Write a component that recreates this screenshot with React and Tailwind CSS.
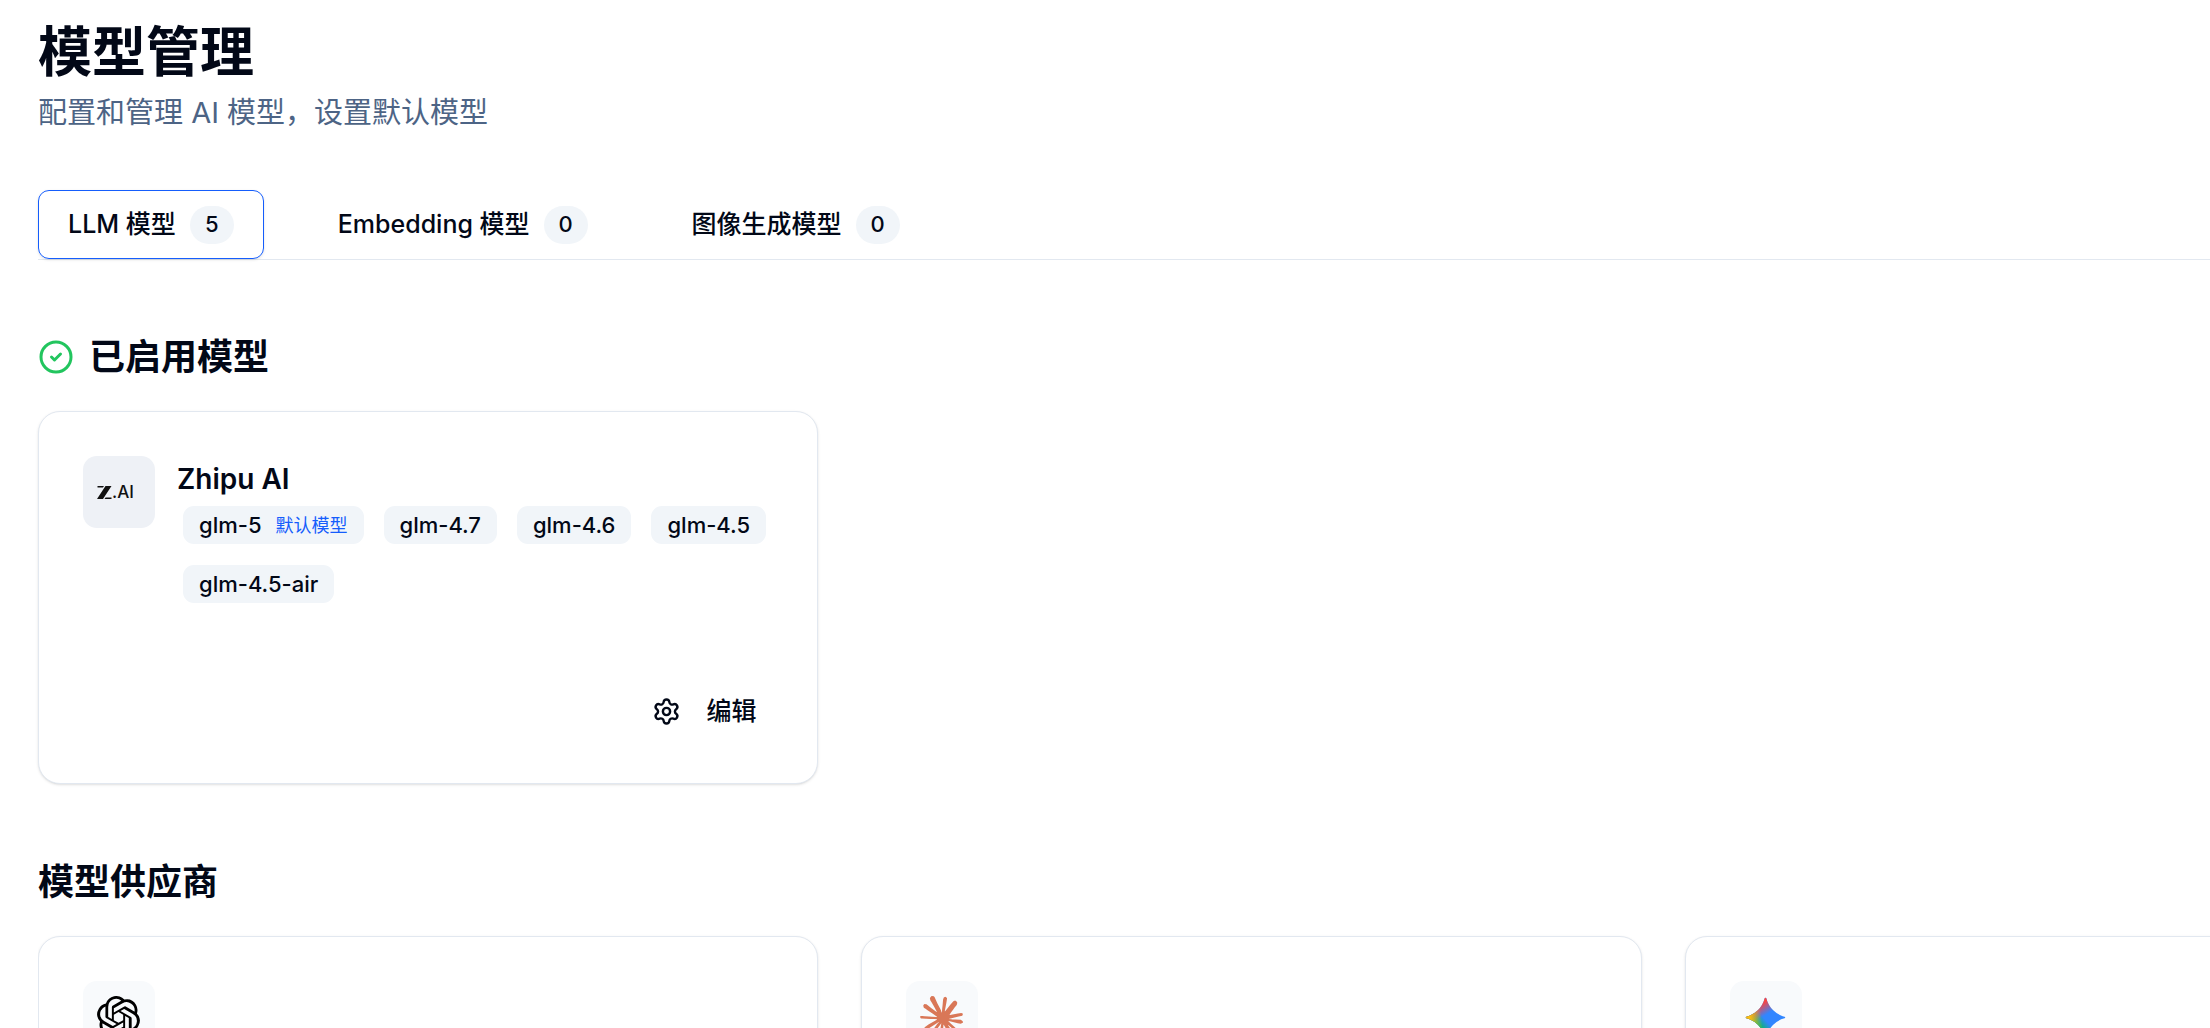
import { CircleCheck, Settings } from "lucide-react";

const FONT = 'font-[Inter,"Noto_Sans_CJK_SC",sans-serif]';

const TABS = [
  { label: "LLM 模型", count: 5 },
  { label: "Embedding 模型", count: 0 },
  { label: "图像生成模型", count: 0 },
];

const MODELS = ["glm-5", "glm-4.7", "glm-4.6", "glm-4.5", "glm-4.5-air"];

function ZaiLogo() {
  return (
    <span className="flex items-center text-[#111]">
      <svg viewBox="0 0 30 26" className="h-[13px] w-[15px]" fill="currentColor" aria-hidden="true">
        <path d="M1 0h13l-2.2 3H1zM29 0 12 26H0L17 0zM29 23v3H15l2.2-3z" />
      </svg>
      <span className="text-[17px] leading-none font-medium">.AI</span>
    </span>
  );
}

function OpenAILogo() {
  return (
    <svg viewBox="0 0 24 24" className="size-[43px]" fill="#000" role="img" aria-label="OpenAI">
      <path d="M22.2819 9.8211a5.9847 5.9847 0 0 0-.5157-4.9108 6.0462 6.0462 0 0 0-6.5098-2.9A6.0651 6.0651 0 0 0 4.9807 4.1818a5.9847 5.9847 0 0 0-3.9977 2.9 6.0462 6.0462 0 0 0 .7427 7.0966 5.98 5.98 0 0 0 .511 4.9107 6.051 6.051 0 0 0 6.5146 2.9001A5.9847 5.9847 0 0 0 13.2599 24a6.0557 6.0557 0 0 0 5.7718-4.2058 5.9894 5.9894 0 0 0 3.9977-2.9001 6.0557 6.0557 0 0 0-.7475-7.0729zm-9.022 12.6081a4.4755 4.4755 0 0 1-2.8764-1.0408l.1419-.0804 4.7783-2.7582a.7948.7948 0 0 0 .3927-.6813v-6.7369l2.02 1.1686a.071.071 0 0 1 .038.052v5.5826a4.504 4.504 0 0 1-4.4945 4.4944zm-9.6607-4.1254a4.4708 4.4708 0 0 1-.5346-3.0137l.142.0852 4.783 2.7582a.7712.7712 0 0 0 .7806 0l5.8428-3.3685v2.3324a.0804.0804 0 0 1-.0332.0615L9.74 19.9502a4.4992 4.4992 0 0 1-6.1408-1.6464zM2.3408 7.8956a4.485 4.485 0 0 1 2.3655-1.9728V11.6a.7664.7664 0 0 0 .3879.6765l5.8144 3.3543-2.0201 1.1685a.0757.0757 0 0 1-.071 0l-4.8303-2.7865A4.504 4.504 0 0 1 2.3408 7.872zm16.5963 3.8558L13.1038 8.364 15.1192 7.2a.0757.0757 0 0 1 .071 0l4.8303 2.7913a4.4944 4.4944 0 0 1-.6765 8.1042v-5.6772a.79.79 0 0 0-.407-.667zm2.0107-3.0231l-.142-.0852-4.7735-2.7818a.7759.7759 0 0 0-.7854 0L9.409 9.2297V6.8974a.0662.0662 0 0 1 .0284-.0615l4.8303-2.7866a4.4992 4.4992 0 0 1 6.6802 4.66zM8.3065 12.863l-2.02-1.1638a.0804.0804 0 0 1-.038-.0567V6.0742a4.4992 4.4992 0 0 1 7.3757-3.4537l-.142.0805L8.704 5.459a.7948.7948 0 0 0-.3927.6813zm1.0976-2.3654l2.602-1.4998 2.6069 1.4998v2.9994l-2.5974 1.4997-2.6067-1.4997Z" />
    </svg>
  );
}

function ClaudeLogo() {
  return (
    <svg viewBox="0 0 24 24" className="size-[43px]" fill="#D97757" role="img" aria-label="Claude">
      <path d="M4.709 15.955l4.72-2.647.08-.23-.08-.128H9.2l-.79-.048-2.698-.073-2.339-.097-2.266-.122-.571-.121L0 11.784l.055-.352.48-.321.686.06 1.52.103 2.278.158 1.652.097 2.449.255h.389l.055-.157-.134-.098-.103-.097-2.358-1.596-2.552-1.688-1.336-.972-.724-.491-.364-.462-.158-1.008.656-.722.881.06.225.061.893.686 1.908 1.476 2.491 1.833.365.304.145-.103.019-.073-.164-.274-1.355-2.446-1.446-2.49-.644-1.032-.17-.619a2.97 2.97 0 01-.104-.729L6.283.134 6.696 0l.996.134.42.364.62 1.414 1.002 2.229 1.555 3.03.456.898.243.832.091.255h.158V9.01l.128-1.706.237-2.095.23-2.695.08-.76.376-.91.747-.492.584.28.48.685-.067.444-.286 1.851-.559 2.903-.364 1.942h.212l.243-.242.985-1.306 1.652-2.064.73-.82.85-.904.547-.431h1.033l.76 1.129-.34 1.166-1.064 1.347-.881 1.142-1.264 1.7-.79 1.36.073.11.188-.02 2.856-.606 1.543-.28 1.841-.315.833.388.091.395-.328.807-1.969.486-2.309.462-3.439.813-.042.03.049.061 1.549.146.662.036h1.622l3.02.225.79.522.474.638-.079.485-1.215.62-1.64-.389-3.829-.91-1.312-.329h-.182v.11l1.093 1.068 2.006 1.81 2.509 2.33.127.578-.322.455-.34-.049-2.205-1.657-.851-.747-1.926-1.62h-.128v.17l.444.649 2.345 3.521.122 1.08-.17.353-.608.213-.668-.122-1.374-1.925-1.415-2.167-1.143-1.943-.14.08-.674 7.254-.316.37-.729.28-.607-.461-.322-.747.322-1.476.389-1.924.315-1.53.286-1.9.17-.632-.012-.042-.14.018-1.434 1.967-2.18 2.945-1.726 1.845-.414.164-.717-.37.067-.662.401-.589 2.388-3.036 1.44-1.882.93-1.086-.006-.158h-.055L4.132 18.56l-1.13.146-.487-.456.061-.746.231-.243 1.908-1.312z" />
    </svg>
  );
}

function GeminiLogo() {
  const star =
    "M20.616 10.835a14.147 14.147 0 01-4.45-3.001 14.111 14.111 0 01-3.678-6.452.503.503 0 00-.975 0 14.134 14.134 0 01-3.679 6.452 14.155 14.155 0 01-4.45 3.001c-.65.28-1.318.505-2.002.678a.502.502 0 000 .975c.684.172 1.35.397 2.002.677a14.147 14.147 0 014.45 3.001 14.112 14.112 0 013.679 6.453.502.502 0 00.975 0c.172-.685.397-1.351.677-2.003a14.145 14.145 0 013.001-4.45 14.113 14.113 0 016.453-3.678.503.503 0 000-.975 13.245 13.245 0 01-2.003-.678z";
  return (
    <svg viewBox="0 0 24 24" className="size-[43px]" role="img" aria-label="Gemini">
      <defs>
        <linearGradient id="g-green" gradientUnits="userSpaceOnUse" x1="7" x2="11" y1="15.5" y2="12">
          <stop stopColor="#08B962" />
          <stop offset="1" stopColor="#08B962" stopOpacity="0" />
        </linearGradient>
        <linearGradient id="g-red" gradientUnits="userSpaceOnUse" x1="8" x2="11.5" y1="5.5" y2="11">
          <stop stopColor="#F94543" />
          <stop offset="1" stopColor="#F94543" stopOpacity="0" />
        </linearGradient>
        <linearGradient id="g-yellow" gradientUnits="userSpaceOnUse" x1="3.5" x2="17.5" y1="13.5" y2="12">
          <stop stopColor="#FABC12" />
          <stop offset=".46" stopColor="#FABC12" stopOpacity="0" />
        </linearGradient>
      </defs>
      <path d={star} fill="#3186FF" />
      <path d={star} fill="url(#g-green)" />
      <path d={star} fill="url(#g-red)" />
      <path d={star} fill="url(#g-yellow)" />
    </svg>
  );
}

const PROVIDERS = [
  { name: "openai", Logo: OpenAILogo },
  { name: "claude", Logo: ClaudeLogo },
  { name: "gemini", Logo: GeminiLogo },
];

const CARD = "rounded-[22px] border border-slate-200 bg-white p-[44px] shadow-sm";
const LOGO_BOX = "flex size-[72px] shrink-0 items-center rounded-[14px] pl-[14px]";

export default function App() {
  return (
    <div className={`${FONT} min-h-screen overflow-x-hidden bg-white text-[#020817]`}>
      <main className="w-[113%] pt-[20px] pr-8 pl-[38px]">
        <header>
          <h1 className="text-[54px] leading-[65px] font-bold">模型管理</h1>
          <p className="mt-[6px] text-[29px] leading-[44px] text-[#4d6485]">
            配置和管理 AI 模型，设置默认模型
          </p>
        </header>

        <div role="tablist" className="mt-[55px] flex gap-[44px] border-b border-slate-200">
          {TABS.map((tab, i) => (
            <button
              key={tab.label}
              type="button"
              role="tab"
              aria-selected={i === 0}
              className={`flex h-[69px] items-center gap-[14px] rounded-[11px] border px-[29px] text-[25px] font-medium ${
                i === 0 ? "border-blue-600 shadow-sm" : "border-transparent"
              }`}
            >
              {tab.label}
              <span className="flex h-[38px] min-w-[44px] items-center justify-center rounded-full bg-slate-100 px-[14px] text-[22px]">
                {tab.count}
              </span>
            </button>
          ))}
        </div>

        <section className="mt-[72px]">
          <h2 className="flex items-center gap-[15px] text-[36px] leading-[50px] font-semibold">
            <CircleCheck className="size-[36px] text-[#22c55e]" strokeWidth={2} />
            已启用模型
          </h2>
          <div className="mt-[29px] grid grid-cols-3 gap-[43px]">
            <article className={CARD}>
              <div className="flex items-start gap-[22px]">
                <div className={`${LOGO_BOX} bg-[#eef1f6]`}>
                  <ZaiLogo />
                </div>
                <div className="min-w-0 flex-1">
                  <h3 className="mb-[4px] text-[28px] leading-[46px] font-semibold">Zhipu AI</h3>
                  <ul className="-mr-4 flex flex-wrap gap-x-[20px] gap-y-[21px] pl-[6px]">
                    {MODELS.map((m, i) => (
                      <li
                        key={m}
                        className="flex h-[38px] items-center gap-[14px] rounded-[11px] bg-slate-100 px-[16px] text-[22px] font-medium"
                      >
                        {m}
                        {i === 0 && <span className="text-[18px] font-normal text-blue-600">默认模型</span>}
                      </li>
                    ))}
                  </ul>
                </div>
              </div>
              <div className="mt-[81px] flex justify-end">
                <button
                  type="button"
                  className="flex h-[55px] items-center gap-[25px] px-[17px] text-[25px] font-medium"
                >
                  <Settings className="size-[29px]" strokeWidth={2} />
                  编辑
                </button>
              </div>
            </article>
          </div>
        </section>

        <section className="mt-[73px] h-[172px] overflow-hidden">
          <h2 className="text-[36px] leading-[50px] font-semibold">模型供应商</h2>
          <div className="mt-[29px] grid grid-cols-3 gap-[43px]">
            {PROVIDERS.map(({ name, Logo }) => (
              <article key={name} className={CARD}>
                <div className={`${LOGO_BOX} bg-slate-50`}>
                  <Logo />
                </div>
              </article>
            ))}
          </div>
        </section>
      </main>
    </div>
  );
}
